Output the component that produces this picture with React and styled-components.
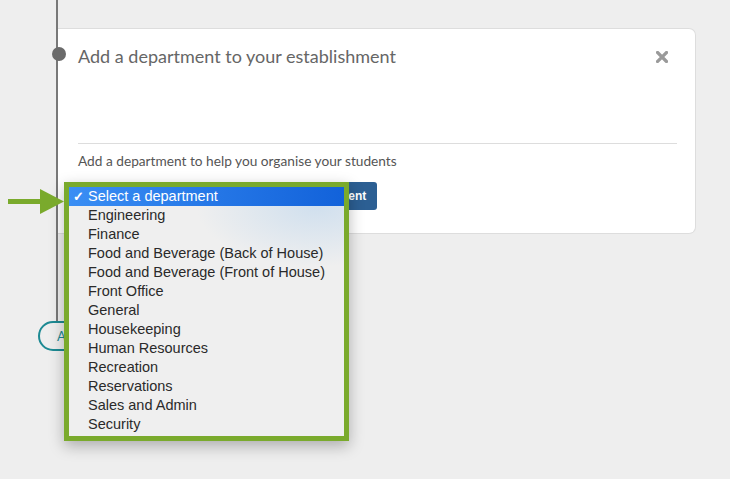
import React from 'react';
import styled, { createGlobalStyle } from 'styled-components';

const departments = [
  'Select a department',
  'Engineering',
  'Finance',
  'Food and Beverage (Back of House)',
  'Food and Beverage (Front of House)',
  'Front Office',
  'General',
  'Housekeeping',
  'Human Resources',
  'Recreation',
  'Reservations',
  'Sales and Admin',
  'Security',
];

const App = () => {
  return (
    <Page>
      <GlobalStyle />
      <Timeline>
        <Card>
          <Dot />
          <CardHeader>
            <Title>Add a department to your establishment</Title>
            <CloseButton aria-label="close">
              <svg width="12" height="12" viewBox="0 0 12 12">
                <path d="M1.5 1.5 L10.5 10.5 M10.5 1.5 L1.5 10.5" stroke="#9a9a9a" strokeWidth="3.2" strokeLinecap="square" />
              </svg>
            </CloseButton>
          </CardHeader>
          <Divider />
          <CardBody>
            <Hint>Add a department to help you organise your students</Hint>
            <FieldRow>
              <SelectBox />
              <PrimaryButton>Add Department</PrimaryButton>
              <Dropdown>
                {departments.map((d, i) => (
                  <Option key={d} selected={i === 0}>
                    {i === 0 && <Check>✓</Check>}
                    {d}
                  </Option>
                ))}
              </Dropdown>
            </FieldRow>
          </CardBody>
        </Card>
      </Timeline>
      <PillButton>Add</PillButton>
      <Pointer width="56" height="25" viewBox="0 0 56 25">
        <rect x="0" y="10" width="34" height="5" fill="#7aaa2c" />
        <polygon points="32,0 56,12.5 32,25" fill="#7aaa2c" />
      </Pointer>
    </Page>
  );
};

export default App;

const GlobalStyle = createGlobalStyle`
  html, body {
    margin: 0;
    padding: 0;
    background: #eeeeee;
  }
  body {
    font-family: Lato, "Open Sans", sans-serif;
  }
`;

const Page = styled.div`
  position: relative;
  width: 730px;
  height: 479px;
  overflow: hidden;
`;

const Timeline = styled.div`
  margin-left: 56px;
  height: 321px;
  box-sizing: border-box;
  padding-top: 28px;
  border-left: 2px solid #787878;
`;

const Card = styled.div`
  position: relative;
  width: 638px;
  height: 206px;
  box-sizing: border-box;
  background: #ffffff;
  border: 1px solid #dddddd;
  border-left: none;
  border-radius: 0 7px 7px 0;
  display: flex;
  flex-direction: column;
`;

const Dot = styled.span`
  position: absolute;
  left: -6px;
  top: 18px;
  width: 14px;
  height: 14px;
  border-radius: 50%;
  background: #6a6a6a;
`;

const CardHeader = styled.div`
  display: flex;
  justify-content: space-between;
  align-items: flex-start;
  height: 114px;
  box-sizing: border-box;
  padding: 16px 27px 0 20px;
`;

const Title = styled.h1`
  margin: 0;
  font-size: 18px;
  line-height: 22px;
  font-weight: 400;
  color: #666666;
`;

const CloseButton = styled.span`
  display: flex;
  margin-top: 6px;
`;

const Divider = styled.div`
  height: 1px;
  background: #dddddd;
  margin: 0 18px 0 20px;
`;

const CardBody = styled.div`
  padding: 9px 18px 0 20px;
`;

const Hint = styled.p`
  margin: 0;
  font-size: 13.7px;
  line-height: 16px;
  color: #555555;
`;

const FieldRow = styled.div`
  position: relative;
  display: flex;
  gap: 7px;
  margin-top: 13px;
`;

const SelectBox = styled.div`
  width: 177px;
  height: 28px;
  box-sizing: border-box;
  border: 1px solid #9cbf7a;
  border-radius: 4px;
  background: #ffffff;
`;

const PrimaryButton = styled.button`
  width: 115px;
  height: 28px;
  border: none;
  border-radius: 3px;
  background: #2c5f93;
  color: #ffffff;
  font-family: "Liberation Sans", Arial, sans-serif;
  font-size: 12px;
  font-weight: 700;
  padding: 0 12px 0 11px;
  text-align: left;
  white-space: nowrap;
  overflow: hidden;
`;

const Dropdown = styled.ul`
  position: absolute;
  left: -14px;
  top: 0;
  width: 285px;
  margin: 0;
  padding: 0 0 2px;
  list-style: none;
  box-sizing: border-box;
  border: 5px solid #7aaa2c;
  background:
    radial-gradient(ellipse 120px 60px at 90% 8%, rgba(205, 222, 238, 0.9), rgba(239, 239, 239, 0) 100%),
    #efefef;
  box-shadow: 0 5px 14px rgba(0, 0, 0, 0.28);
`;

const Option = styled.li`
  position: relative;
  height: 19px;
  line-height: 19px;
  padding-left: 19px;
  font-family: "Liberation Sans", Arial, sans-serif;
  font-size: 14.5px;
  white-space: nowrap;
  color: ${(props) => (props.selected ? '#ffffff' : '#2a2a2a')};
  background: ${(props) => (props.selected ? 'linear-gradient(to right, #3a8ef4, #1262da)' : 'transparent')};
`;

const Check = styled.span`
  position: absolute;
  left: 4px;
  top: 0;
  font-size: 13px;
  font-weight: 700;
`;

const PillButton = styled.button`
  display: block;
  margin-left: 38px;
  height: 30px;
  width: 160px;
  padding: 0 17px;
  text-align: left;
  border: 2px solid #1d8a93;
  border-radius: 16px;
  background: transparent;
  color: #1d8a93;
  font-family: Lato, sans-serif;
  font-size: 13px;
`;

const Pointer = styled.svg`
  position: absolute;
  left: 8px;
  top: 189px;
`;
